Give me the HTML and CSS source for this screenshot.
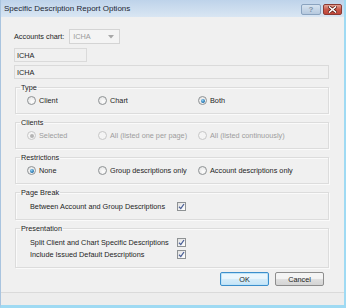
FILE: index.html
```html
<!DOCTYPE html>
<html lang="en">
<head>
  <meta charset="UTF-8" />
  <title>Specific Description Report Options</title>
  <link rel="stylesheet" href="styles.css">
</head>
<body>
  <div class="window">
    <div class="titlebar">
      <span class="title">Specific Description Report Options</span>
      <div class="caption-buttons">
        <span class="cap-btn help">?</span>
        <span class="cap-btn close">
          <svg width="9" height="7" viewBox="0 0 9 7">
            <path d="M1.5 1 L7.5 6 M7.5 1 L1.5 6" stroke="#5a1c16" stroke-width="3" stroke-linecap="square"/>
            <path d="M1.5 1 L7.5 6 M7.5 1 L1.5 6" stroke="#ffffff" stroke-width="1.6" stroke-linecap="square"/>
          </svg>
        </span>
      </div>
    </div>

    <div class="client">
      <div class="chart-row">
        <span class="lbl">Accounts chart:</span>
        <div class="combo">
          <span>ICHA</span>
          <svg width="6" height="4" viewBox="0 0 6 4"><path d="M0 0 H6 L3 3.5 Z" fill="#a8a8a8"/></svg>
        </div>
      </div>
      <div class="field short">ICHA</div>
      <div class="field long">ICHA</div>

      <fieldset class="group">
        <legend>Type</legend>
        <div class="options">
          <label class="opt"><span class="radio"></span>Client</label>
          <label class="opt"><span class="radio"></span>Chart</label>
          <label class="opt"><span class="radio on"></span>Both</label>
        </div>
      </fieldset>

      <fieldset class="group">
        <legend>Clients</legend>
        <div class="options disabled">
          <label class="opt"><span class="radio on"></span>Selected</label>
          <label class="opt"><span class="radio"></span>All (listed one per page)</label>
          <label class="opt"><span class="radio"></span>All (listed continuously)</label>
        </div>
      </fieldset>

      <fieldset class="group">
        <legend>Restrictions</legend>
        <div class="options">
          <label class="opt"><span class="radio on"></span>None</label>
          <label class="opt"><span class="radio"></span>Group descriptions only</label>
          <label class="opt"><span class="radio"></span>Account descriptions only</label>
        </div>
      </fieldset>

      <fieldset class="group">
        <legend>Page Break</legend>
        <div class="checks">
          <span>Between Account and Group Descriptions</span>
          <span class="check"><svg width="7" height="7" viewBox="0 0 7 7"><path d="M1 3.8 L2.8 5.6 L6 1" fill="none" stroke="#4a5f97" stroke-width="1.3"/></svg></span>
        </div>
      </fieldset>

      <fieldset class="group">
        <legend>Presentation</legend>
        <div class="checks">
          <span>Split Client and Chart Specific Descriptions</span>
          <span class="check"><svg width="7" height="7" viewBox="0 0 7 7"><path d="M1 3.8 L2.8 5.6 L6 1" fill="none" stroke="#4a5f97" stroke-width="1.3"/></svg></span>
          <span>Include Issued Default Descriptions</span>
          <span class="check"><svg width="7" height="7" viewBox="0 0 7 7"><path d="M1 3.8 L2.8 5.6 L6 1" fill="none" stroke="#4a5f97" stroke-width="1.3"/></svg></span>
        </div>
      </fieldset>

      <div class="actions">
        <button class="btn ok">OK</button>
        <button class="btn">Cancel</button>
      </div>
    </div>

    <div class="status"></div>
  </div>
</body>
</html>
```

FILE: styles.css
```css
body {
  margin: 0;
  background: #f0f0f0;
  font-family: "Liberation Sans", Arial, sans-serif;
  color: #1e1e1e;
}
.window {
  width: 346px;
  height: 308px;
  box-sizing: border-box;
  border-left: 1px solid #a9c4df;
  border-right: 2px solid #9fdaf3;
  border-bottom: 3px solid #9fdaf3;
  background: #f0f0f0;
  display: flex;
  flex-direction: column;
}
.titlebar {
  height: 17px;
  background: linear-gradient(#bed3ea, #d9e6f3);
  display: flex;
  align-items: center;
  justify-content: space-between;
  padding-left: 3px;
  flex-shrink: 0;
}
.title {
  font-size: 8px;
  color: #1c2733;
}
.caption-buttons {
  display: flex;
  gap: 2px;
  align-self: flex-start;
  margin-top: 4px;
  margin-right: 2px;
}
.cap-btn {
  height: 11px;
  box-sizing: border-box;
  border: 1px solid #8aa3bf;
  border-radius: 2px;
  display: flex;
  align-items: center;
  justify-content: center;
}
.help {
  width: 20px;
  background: linear-gradient(#d6e3f0, #b6c9de);
  color: #8093a8;
  font-size: 8px;
  font-weight: bold;
  line-height: 1;
}
.close {
  width: 19px;
  border-color: #8b3a33;
  background: linear-gradient(#e4a194, #c9584a 50%, #c0463a);
}
.client {
  flex: 1;
  padding: 12px 15px 0 13px;
  font-size: 7.3px;
}
.chart-row {
  display: flex;
  align-items: center;
  gap: 5px;
  height: 15px;
}
.combo {
  width: 51px;
  height: 15px;
  box-sizing: border-box;
  border: 1px solid #d4d4d4;
  background: #f4f4f4;
  color: #9a9a9a;
  display: flex;
  align-items: center;
  justify-content: space-between;
  padding: 0 5px 0 3px;
}
.field {
  height: 14px;
  box-sizing: border-box;
  border: 1px solid #dadada;
  background: #f0f0f0;
  display: flex;
  align-items: center;
  padding-left: 2px;
  margin-top: 3px;
}
.field.short {
  width: 73px;
  margin-top: 4px;
}
.field.long {
  width: 315px;
}
.group {
  margin: 4px 0 0 1px;
  padding: 3px 0 7px 0;
  border: 1px solid #dcdcdc;
  box-shadow: inset 1px 1px 0 #fafafa, 1px 1px 0 #fafafa;
  width: 314px;
  box-sizing: border-box;
}
.group legend {
  padding: 0 1px;
  margin-left: 4px;
  line-height: 9px;
}
.options {
  display: grid;
  grid-template-columns: 71px 100px auto;
  padding-left: 11px;
  height: 11px;
  align-items: center;
}
.options.disabled {
  color: #9d9d9d;
}
.opt {
  display: flex;
  align-items: center;
  gap: 3px;
}
.radio {
  width: 9px;
  height: 9px;
  box-sizing: border-box;
  border-radius: 50%;
  border: 1px solid #8e9294;
  background: radial-gradient(circle at 60% 65%, #ffffff, #dcdcdc);
  display: inline-flex;
  align-items: center;
  justify-content: center;
}
.radio.on::after {
  content: "";
  width: 4px;
  height: 4px;
  border-radius: 50%;
  background: radial-gradient(circle at 40% 35%, #8fd0f5, #1b6aa5 70%);
}
.disabled .radio {
  border-color: #c6c6c6;
  background: #f4f4f4;
}
.disabled .radio.on::after {
  background: #b4b4b4;
}
.checks {
  display: grid;
  grid-template-columns: 147px 9px;
  row-gap: 3px;
  padding: 2px 0 1px 14px;
  align-items: center;
}
.check {
  width: 9px;
  height: 9px;
  box-sizing: border-box;
  border: 1px solid #8e9294;
  background: linear-gradient(135deg, #e2e2e2, #ffffff);
  display: flex;
  align-items: center;
  justify-content: center;
}
.actions {
  display: flex;
  justify-content: flex-end;
  gap: 6px;
  margin-top: 4px;
  padding-right: 5px;
}
.btn {
  width: 49px;
  height: 14px;
  box-sizing: border-box;
  border: 1px solid #8d8d8d;
  border-radius: 2px;
  background: linear-gradient(#f4f4f4 45%, #dedede 55%, #d4d4d4);
  font-family: "Liberation Sans", Arial, sans-serif;
  font-size: 7.3px;
  color: #1e1e1e;
  padding: 0;
}
.btn.ok {
  border-color: #3c8ecb;
  background: linear-gradient(#eaf6fd 45%, #d3ebf9 55%, #c6e4f7);
  box-shadow: inset 0 0 0 1px #bde3f8;
}
.status {
  height: 12px;
  border-top: 1px solid #dadada;
  background: #ededed;
  flex-shrink: 0;
}
```
